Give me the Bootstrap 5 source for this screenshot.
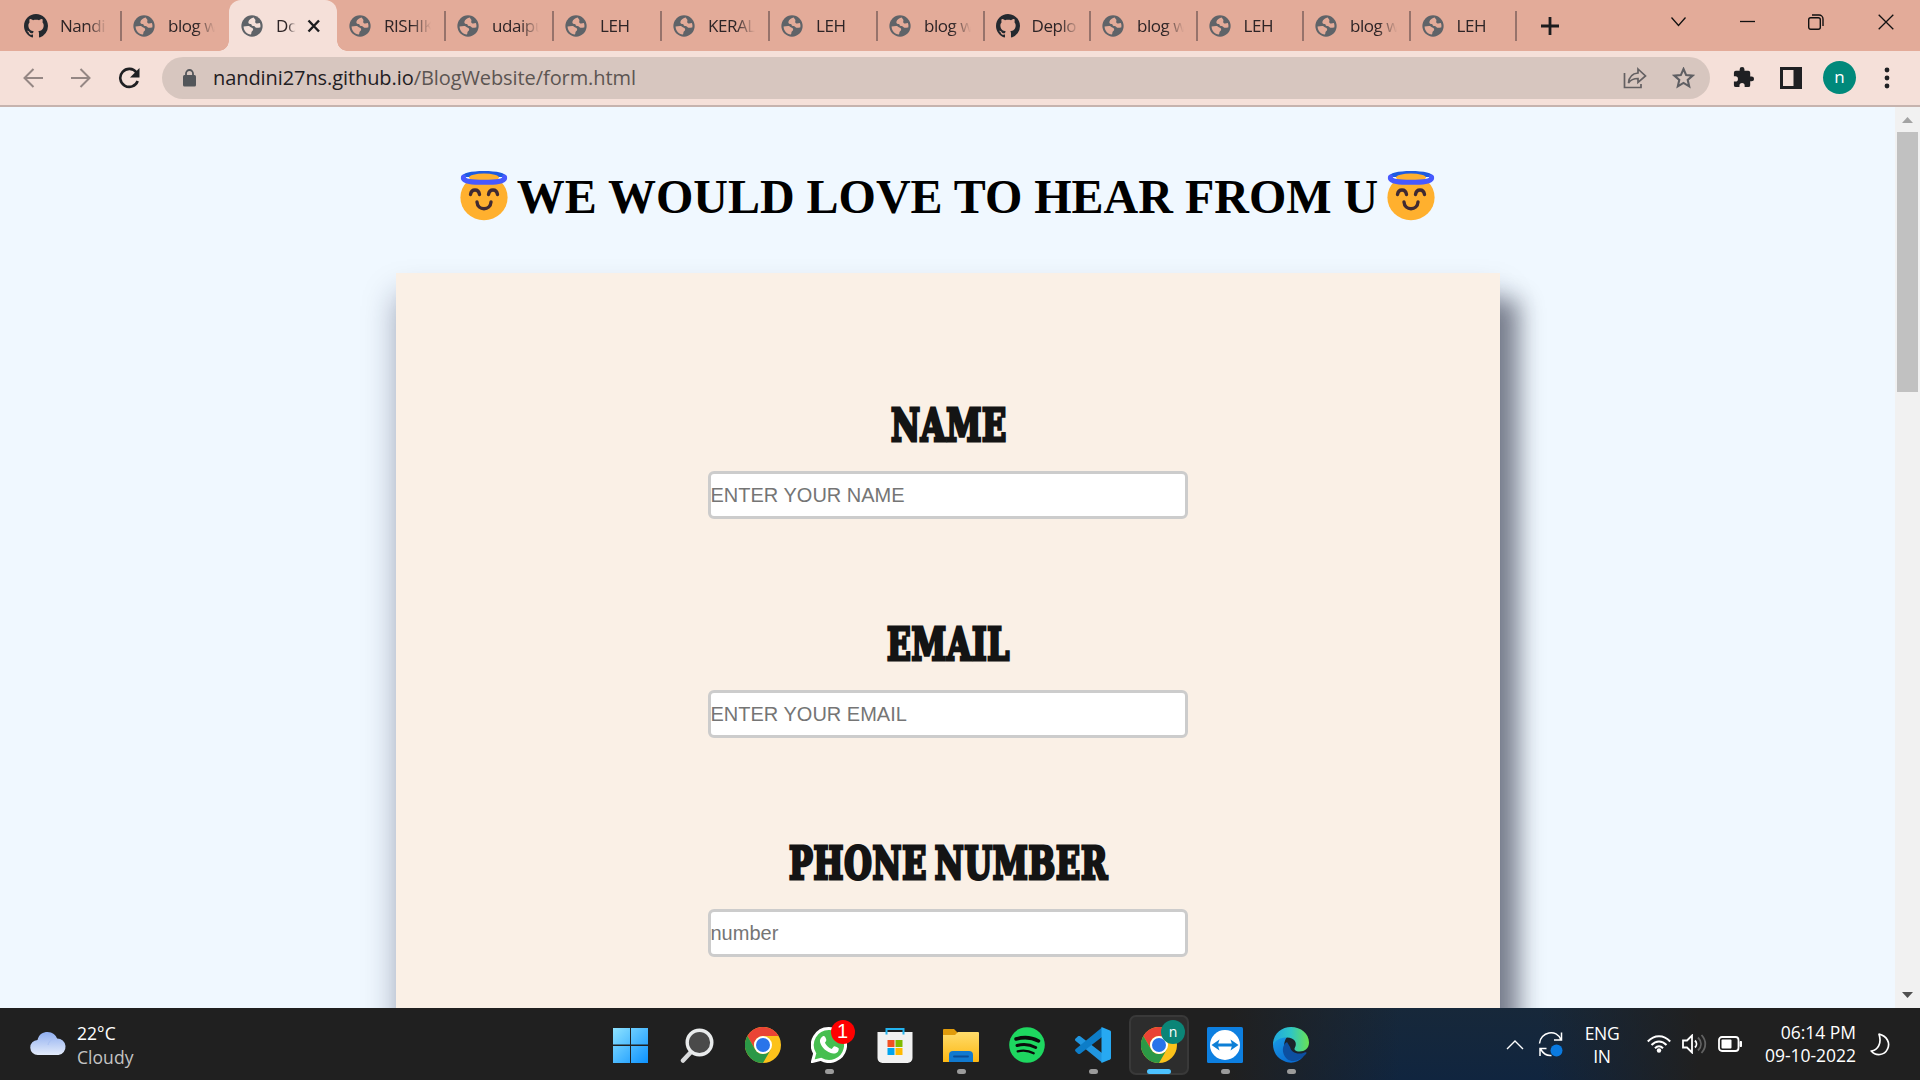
<!DOCTYPE html>
<html lang="en">
<head>
<meta charset="utf-8">
<title>Document</title>
<link href="https://cdn.jsdelivr.net/npm/bootstrap@5.3.0/dist/css/bootstrap.min.css" rel="stylesheet">
<style>
body{width:1920px;height:1080px;overflow:hidden;font-family:"Open Sans","Noto Sans",sans-serif;background:#f0f8ff}
svg{display:block;flex:none}
.tabstrip{height:51px;background:#e3ab99;padding-left:12px;color:#2d2426;--tabbg:#e3ab99}
.btab{width:108px;height:51px;padding-left:12px;position:relative;flex:none}
.btab.slim{width:106.5px}
.btab.sep::after{content:"";position:absolute;right:-1px;top:11px;width:2px;height:30px;background:#97736b}
.btab .ttl{width:48px;margin-left:13px;font-size:17px;letter-spacing:-.45px;line-height:24px;white-space:nowrap;-webkit-mask-image:linear-gradient(90deg,#000 58%,transparent 98%)}
.btab.first{width:109px}
.btab.first .ttl{margin-left:12px}
.btab.current{background:#f5e0d9;border-radius:12px 12px 0 0;--tabbg:#f5e0d9}
.btab.current .ttl{width:20px}
.btab.current::before,.btab.current::after{content:"";position:absolute;bottom:0;width:10px;height:10px}
.btab.current::before{left:-10px;background:radial-gradient(circle at 0 0,transparent 9.5px,#f5e0d9 10px)}
.btab.current::after{right:-10px;background:radial-gradient(circle at 100% 0,transparent 9.5px,#f5e0d9 10px)}
.winctl{padding-right:26.5px;gap:53.5px;height:43px}
.toolbar{height:56px;background:#f5e0d9;border-bottom:2px solid #c6b3ae;padding:6px 24px 7px 23px}
.omni{width:1548px;height:42px;border-radius:21px;background:#d7c6bf;margin-left:21px;padding:0 15px 0 21px;flex:none}
.addr{font-size:20px;letter-spacing:-.08px;line-height:30px;padding-top:1px;color:#5c5552;white-space:nowrap}
.addr b{font-weight:400;color:#1f2023}
.avatar{width:33px;height:33px;background:#00897b;color:#fff;font-size:17px;line-height:31px}
.view{height:901px;overflow:hidden}
.page{width:1895px;overflow:hidden;padding-top:56px}
.hello{font:bold 48px/64px "Liberation Serif","Times New Roman",serif;color:#000;height:110px;margin:0;gap:8.5px;white-space:nowrap}
.hello span{padding-top:2px}
.panel{width:1104px;height:900px;background:#faf0e6;box-shadow:20px 27px 22px rgba(20,22,42,.44),0 22px 30px rgba(20,30,65,.35);padding-top:125px;margin-left:396px}
.fieldrow{height:219px}
.fieldrow label svg{overflow:visible}
.fieldrow text{font:bold 44px "DejaVu Serif Condensed","DejaVu Serif",serif;fill:#141414;stroke:#141414;stroke-width:3;word-spacing:-5px;letter-spacing:1px}
.entry{width:480px;height:48px;border:3px solid #ccc;border-radius:6px;background:#fff;padding:0;font:20px "Liberation Sans",Arial,sans-serif;margin-top:28px;text-indent:-.5px}
.entry::placeholder{color:#757575;opacity:1}
.sbar{width:25px;background:#f1f1f1;padding:10px 0}
.thumb{width:21px;height:260px;background:#c1c1c1;margin-top:9px}
.taskbar{height:72px;color:#fff;background:linear-gradient(90deg,transparent 1230px,#202020 1230px,rgba(32,32,32,0) 1400px,rgba(32,32,32,0) 1540px,#202020 1700px),linear-gradient(#17283a,#10253f);position:relative}
.taskbar::before{content:"";position:absolute;left:0;top:0;width:1231px;height:72px;background:#202020}
.taskbar>*{position:relative}
.weather{width:598px;padding-left:30px;flex:none;gap:10px}
.wtxt{font-size:17.5px;line-height:24px;letter-spacing:.05px;padding-top:2px}
.wtxt .dim{color:#c4c4c4}
.slot{width:66px;height:72px;padding-top:19px;flex:none;position:relative}
.pill{width:9px;height:5px;border-radius:3px;background:#9b9b9b;margin-top:6px}
.pill.wide{width:24px;background:#4cc2ff}
.slot.on::before{content:"";position:absolute;left:3px;top:7px;width:60px;height:60px;background:#2d2d2d;border:2px solid #393939;border-radius:7px}
.slot>*{position:relative}
.slot .bubble{position:absolute;left:34.5px;top:12px;width:24px;height:24px;border-radius:50%;background:red;font:20px/23px "Liberation Sans",sans-serif;text-align:center}
.slot .bubble.teal{background:#0b8577;font:14px/23px "Open Sans",sans-serif;left:35px}
.tray{padding-left:182px;font-size:17.5px;line-height:23px;letter-spacing:-.3px}
.lang{width:60px;margin-left:9px;padding-top:1px}
.clock{width:100px;margin-left:13px;letter-spacing:-.03px}
</style>
<script src="https://cdn.jsdelivr.net/npm/bootstrap@5.3.0/dist/js/bootstrap.bundle.min.js"></script>
</head>
<body>
<svg width="0" height="0" class="position-absolute">
<defs>
<symbol id="globe" viewBox="0 0 24 24"><circle cx="12" cy="12" r="11.6" fill="#5f6368"/><path d="M14 2.800C11.500 3.400 8.500 5 8 7.600c-.2 1.800 1.600 2.200 3.200 2.200.3 1.500 1 2.300 2.600 2.300 1.400 0 1.600 1.500 3 1.700 1.500.2 3-.4 4.200-.2.400-1.600.3-3.400-.4-5-1.500.2-3.200 1.300-4.600.1-1.300-1.200.3-2.400-.4-3.500-.4-.7-1.200-1-1.600-2.400zM2.800 12.600c.1 4.600 3.400 8.200 8 8.800.8-1.200.2-2.400 1-3.300.9-.9 1.700-1.300 1.400-2.800-.3-1.500-1.900-1.500-2.900-2.200-.9-.7-1.400-1.300-2.700-1.100-1.700.2-3.200.6-4.800.6z" fill="var(--tabbg)"/></symbol>
<symbol id="octo" viewBox="0 0 16 16"><path fill="#24292f" d="M8 0C3.580 0 0 3.580 0 8c0 3.540 2.290 6.530 5.470 7.590.4.070.55-.17.55-.38 0-.19-.01-.82-.01-1.490-2.010.37-2.530-.49-2.690-.94-.09-.23-.48-.94-.82-1.130-.28-.15-.68-.52-.01-.53.63-.01 1.080.58 1.230.82.72 1.210 1.870.87 2.330.66.070-.52.28-.87.51-1.070-1.780-.2-3.640-.89-3.640-3.950 0-.87.31-1.590.82-2.150-.08-.2-.36-1.020.08-2.120 0 0 .67-.21 2.200.82.640-.18 1.320-.27 2-.27s1.360.09 2 .27c1.530-1.040 2.200-.82 2.200-.82.440 1.100.16 1.920.08 2.120.51.56.82 1.270.82 2.150 0 3.070-1.870 3.750-3.650 3.950.29.25.54.73.54 1.480 0 1.070-.01 1.930-.01 2.200 0 .21.15.46.55.38A8.010 8.010 0 0 0 16 8c0-4.420-3.580-8-8-8z"/></symbol>
<symbol id="angel" viewBox="0 0 48 50"><ellipse cx="24" cy="26.500" rx="23.600" ry="22.800" fill="#ffb02e"/><path d="M1.500 6C2 2 11 0 24 0s22 2 22.500 6z" fill="#1d5be0"/><ellipse cx="24" cy="6.500" rx="15" ry="4" fill="#ffb02e"/><path d="M3.500 6C2 10.800 14 11.300 24 11.300s22-.5 20.500-5.300" fill="none" stroke="#4759ff" stroke-width="5" stroke-linecap="round"/><g fill="none" stroke="#402a32" stroke-width="3.400" stroke-linecap="round"><path d="M10.500 23.500c1-6 8-6 9 0M28.500 23.500c1-6 8-6 9 0M17 31c.5 9 13.500 9 14 0"/></g></symbol>
<symbol id="chrome" viewBox="0 0 36 36"><circle cx="18" cy="18" r="18" fill="#fcc21b"/><path d="M2.400 9A18 18 0 0 1 33.600 9H18a9 9 0 0 0-7.800 13.500z" fill="#ea4335"/><path d="M2.400 9A18 18 0 0 0 18 36l7.800-13.500A9 9 0 0 1 10.200 22.500z" fill="#2b9846"/><circle cx="18" cy="18" r="9" fill="#fff"/><circle cx="18" cy="18" r="7" fill="#2a74ea"/></symbol>
<linearGradient id="gw" x2="1" y2="1"><stop stop-color="#8ee3ff"/><stop offset="1" stop-color="#0c92ff"/></linearGradient>
<linearGradient id="gc" x2="0" y2="1"><stop stop-color="#8faef0"/><stop offset="1" stop-color="#e4ecfb"/></linearGradient>
<linearGradient id="gf" x2="0" y2="1"><stop stop-color="#ffdc6b"/><stop offset="1" stop-color="#fdb813"/></linearGradient>
<linearGradient id="ge" x2="1"><stop stop-color="#1fa7df"/><stop offset=".5" stop-color="#2fc6c4"/><stop offset="1" stop-color="#6ae253"/></linearGradient>
<linearGradient id="gb" x2=".6" y2="1"><stop stop-color="#1ba0e8"/><stop offset="1" stop-color="#0a6bd0"/></linearGradient>
</defs></svg>

<header>
<div class="tabstrip d-flex align-items-center">
 <div class="btab first sep d-flex align-items-center"><svg width="24" height="24"><use href="#octo"/></svg><span class="ttl">Nandi</span></div>
 <div class="btab d-flex align-items-center"><svg width="22" height="22"><use href="#globe"/></svg><span class="ttl">blog w</span></div>
 <div class="btab current d-flex align-items-center"><svg width="22" height="22"><use href="#globe"/></svg><span class="ttl">Do</span><svg style="margin-left:10px" width="16" height="16" viewBox="0 0 16 16"><path d="M2.500 2.500l10.500 11M13 2.500l-10.500 11" stroke="#1c1c1e" stroke-width="2.400"/></svg></div>
 <div class="btab sep d-flex align-items-center"><svg width="22" height="22"><use href="#globe"/></svg><span class="ttl">RISHIK</span></div>
 <div class="btab sep d-flex align-items-center"><svg width="22" height="22"><use href="#globe"/></svg><span class="ttl">udaipu</span></div>
 <div class="btab sep d-flex align-items-center"><svg width="22" height="22"><use href="#globe"/></svg><span class="ttl">LEH</span></div>
 <div class="btab sep d-flex align-items-center"><svg width="22" height="22"><use href="#globe"/></svg><span class="ttl">KERAL</span></div>
 <div class="btab sep d-flex align-items-center"><svg width="22" height="22"><use href="#globe"/></svg><span class="ttl">LEH</span></div>
 <div class="btab slim sep d-flex align-items-center"><svg width="22" height="22"><use href="#globe"/></svg><span class="ttl">blog w</span></div>
 <div class="btab slim sep d-flex align-items-center"><svg width="24" height="24"><use href="#octo"/></svg><span class="ttl" style="margin-left:12px">Deplo</span></div>
 <div class="btab slim sep d-flex align-items-center"><svg width="22" height="22"><use href="#globe"/></svg><span class="ttl">blog w</span></div>
 <div class="btab slim sep d-flex align-items-center"><svg width="22" height="22"><use href="#globe"/></svg><span class="ttl">LEH</span></div>
 <div class="btab slim sep d-flex align-items-center"><svg width="22" height="22"><use href="#globe"/></svg><span class="ttl">blog w</span></div>
 <div class="btab slim sep d-flex align-items-center"><svg width="22" height="22"><use href="#globe"/></svg><span class="ttl">LEH</span></div>
 <svg style="margin-left:23.5px" width="20" height="20" viewBox="0 0 20 20"><path d="M10 1v18M1 10h18" stroke="#1c1c1e" stroke-width="2.800"/></svg>
 <div class="winctl d-flex align-items-center ms-auto align-self-start">
  <svg width="15" height="15" viewBox="0 0 15 15" fill="none" stroke="#111" stroke-width="1.300"><path d="M.5 3.500l7 8 7-8"/></svg>
  <svg width="15" height="15" viewBox="0 0 15 15"><path d="M0 7.500h15" stroke="#111" stroke-width="1.300"/></svg>
  <svg width="16" height="16" viewBox="0 0 16 16" fill="none" stroke="#111" stroke-width="1.400"><rect x=".7" y="3.700" width="11.600" height="11.600" rx="2"/><path d="M4 1h7a4 4 0 0 1 4 4v7"/></svg>
  <svg width="16" height="16" viewBox="0 0 16 16"><path d="M.7.7l14.600 14.600M15.300.7L.7 15.300" stroke="#111" stroke-width="1.300"/></svg>
 </div>
</div>
<div class="toolbar d-flex align-items-center">
 <svg width="20" height="20" viewBox="0 0 20 20" fill="none" stroke="#958784" stroke-width="2"><path d="M20 10H2M10.500 1L1.500 10l9 9"/></svg>
 <svg style="margin-left:28px" width="20" height="20" viewBox="0 0 20 20" fill="none" stroke="#958784" stroke-width="2"><path d="M0 10h18M9.500 1l9 9-9 9"/></svg>
 <svg style="margin-left:27px" width="23" height="22" viewBox="0 0 23 22"><path d="M18.500 5.500a9 9 0 1 0 1.200 8.500" fill="none" stroke="#1f2023" stroke-width="2.600"/><path d="M21.500 1v9.500H12z" fill="#1f2023"/></svg>
 <div class="omni d-flex align-items-center">
  <svg width="13" height="18" viewBox="0 0 13 18"><rect y="6" width="13" height="11.500" rx="1.500" fill="#53565a"/><path d="M3 7V4.500a3.500 3.500 0 0 1 7 0V7" fill="none" stroke="#53565a" stroke-width="1.800"/></svg>
  <span class="addr" style="margin-left:17px"><b>nandini27ns.github.io</b>/BlogWebsite/form.html</span>
  <svg class="ms-auto" width="24" height="22" viewBox="0 0 24 22" fill="none" stroke="#646062" stroke-width="1.700"><path d="M1.500 6v14.500h16.500V17"/><path d="M15 2l7.500 7-7.500 6.500v-4C10.500 11.500 7.500 13 5.500 16c.5-6 4-9.500 9.500-10z"/></svg>
  <svg style="margin-left:25px" width="23" height="22" viewBox="0 0 24 24" fill="none" stroke="#5f5f63" stroke-width="2.300"><path d="M12 2.200l2.900 6.600 7.100.6-5.400 4.700 1.600 7-6.200-3.700-6.200 3.700 1.600-7L2 9.400l7.100-.6z"/></svg>
 </div>
 <svg style="margin-left:22px" width="23" height="23" viewBox="0 0 24 24"><path fill="#1f2023" d="M20.500 11H19V7a2 2 0 0 0-2-2h-4V3.500a2.500 2.500 0 0 0-5 0V5H4a2 2 0 0 0-2 2v3.800h1.500a2.700 2.700 0 0 1 0 5.400H2V20a2 2 0 0 0 2 2h3.800v-1.500a2.700 2.700 0 0 1 5.400 0V22H17a2 2 0 0 0 2-2v-4h1.500a2.500 2.500 0 0 0 0-5z"/></svg>
 <svg style="margin-left:25px" width="22" height="22" viewBox="0 0 22 22"><path fill="#1f2023" fill-rule="evenodd" d="M0 0h22v22H0zM3 3v16h10.500V3z"/></svg>
 <div class="avatar rounded-circle text-center" style="margin-left:21px">n</div>
 <svg style="margin-left:28px" width="6" height="22" viewBox="0 0 6 22" fill="#1f2023"><circle cx="3" cy="3" r="2.400"/><circle cx="3" cy="11" r="2.400"/><circle cx="3" cy="19" r="2.400"/></svg>
</div>
</header>

<main class="view d-flex">
 <div class="page">
  <h1 class="hello d-flex justify-content-center"><svg style="margin-top:8px" width="48" height="50"><use href="#angel"/></svg><span>WE WOULD LOVE TO HEAR FROM U</span><svg style="margin-top:8px" width="48" height="50"><use href="#angel"/></svg></h1>
  <form class="panel">
   <div class="fieldrow d-flex flex-column align-items-center"><label for="nm"><svg width="124" height="45"><text x="5" y="43" textLength="116" lengthAdjust="spacingAndGlyphs">NAME</text></svg></label><input id="nm" class="entry" placeholder="ENTER YOUR NAME"></div>
   <div class="fieldrow d-flex flex-column align-items-center"><label for="em"><svg width="130" height="45"><text x="4" y="43" textLength="123" lengthAdjust="spacingAndGlyphs">EMAIL</text></svg></label><input id="em" class="entry" placeholder="ENTER YOUR EMAIL"></div>
   <div class="fieldrow d-flex flex-column align-items-center"><label for="ph"><svg width="326" height="45"><text x="4" y="43" textLength="319" lengthAdjust="spacingAndGlyphs">PHONE NUMBER</text></svg></label><input id="ph" class="entry" placeholder="number"></div>
  </form>
 </div>
 <div class="sbar d-flex flex-column align-items-center">
  <svg width="11" height="6"><path d="M0 6L5.500 0 11 6z" fill="#a3a3a3"/></svg>
  <div class="thumb"></div>
  <svg class="mt-auto" width="11" height="6"><path d="M0 0l5.500 6L11 0z" fill="#505050"/></svg>
 </div>
</main>

<footer class="taskbar d-flex">
 <div class="weather d-flex align-items-center">
  <svg width="37" height="26" viewBox="0 0 37 26"><path d="M8 24a7.500 7.500 0 0 1-.5-15C9 3 13 1 17.500 1c5 0 8.500 3 9.500 6.500A8.300 8.300 0 0 1 28.500 24z" fill="url(#gc)"/><path d="M18 14c1-4.500 5-7 9-6.500" fill="none" stroke="#a9c0f3"/></svg>
  <div class="wtxt"><div>22°C</div><div class="dim">Cloudy</div></div>
 </div>
 <div class="slot d-flex flex-column align-items-center"><svg width="36" height="36" viewBox="0 0 36 36"><path fill="url(#gw)" d="M0 1h17v16.500H0zM18 1h17v16.500H18zM0 19h17v17H0zM18 19h17v17H18z"/></svg></div>
 <div class="slot d-flex flex-column align-items-center"><svg width="36" height="36" viewBox="0 0 36 36"><path d="M12 25l-8 8.500" stroke="#d9dadb" stroke-width="4.500" stroke-linecap="round"/><circle cx="20.500" cy="15.500" r="12.300" fill="#4a4a4a" stroke="#e9ebec" stroke-width="3.400"/></svg></div>
 <div class="slot d-flex flex-column align-items-center"><svg width="36" height="36"><use href="#chrome"/></svg></div>
 <div class="slot d-flex flex-column align-items-center"><svg width="36" height="36" viewBox="0 0 36 36"><path d="M18 1.500A16.500 16.500 0 1 1 10 32.400L1.500 34.500 3.700 26.500A16.500 16.500 0 0 1 18 1.500z" fill="#46bf50" stroke="#fff" stroke-width="3"/><path d="M11.500 9.500c1.500-.9 2.500-.2 3.300 1.800.9 2.100.7 2.500-.9 4.400 1.500 3 3.700 5 6.800 6.200l2.100-2.500c.7-.6 4.300 1.300 4.900 1.800.4 3.500-2.500 5.600-5.500 5.300C15.500 25.500 10.500 20.500 9 15c-.4-2.300.9-4.500 2.500-5.500z" fill="#fff"/></svg><span class="pill"></span><span class="bubble">1</span></div>
 <div class="slot d-flex flex-column align-items-center"><svg width="36" height="36" viewBox="0 0 36 36"><path d="M.5 5H35.500V31a5 5 0 0 1-5 5h-25a5 5 0 0 1-5-5z" fill="#f1f1f1"/><path d="M9.500 7.500V2h17v5.500" fill="none" stroke="#23b3ee" stroke-width="2"/><path fill="#f25022" d="M10.500 13h7v7h-7z"/><path fill="#7fba00" d="M18.500 13h7v7h-7z"/><path fill="#00a4ef" d="M10.500 21h7v7h-7z"/><path fill="#ffb900" d="M18.500 21h7v7h-7z"/></svg></div>
 <div class="slot d-flex flex-column align-items-center"><svg width="36" height="36" viewBox="0 0 36 36"><path d="M0 3a1 1 0 0 1 1-1h10l4 4v6H0z" fill="#e09b0b"/><path d="M0 8h12l3-3h20a1 1 0 0 1 1 1v28a1 1 0 0 1-1 1H0z" fill="url(#gf)"/><path d="M6 35v-7a4 4 0 0 1 4-4h16a4 4 0 0 1 4 4v7z" fill="#1079cf"/><path d="M11 29.500h14" stroke="#0a4d95" stroke-width="1.800" stroke-linecap="round"/></svg><span class="pill"></span></div>
 <div class="slot d-flex flex-column align-items-center"><svg width="36" height="36" viewBox="0 0 36 36"><circle cx="18" cy="18" r="17.800" fill="#1ed760"/><g fill="none" stroke="#0b0b0b" stroke-linecap="round"><path d="M7 12c8-2.300 16-1.500 22.500 2" stroke-width="3.500"/><path d="M8 18.500c7-2 13-1.100 18.700 2" stroke-width="2.900"/><path d="M8.700 24.300c6-1.500 11-.8 16 1.900" stroke-width="2.300"/></g></svg></div>
 <div class="slot d-flex flex-column align-items-center"><svg width="36" height="36" viewBox="0 0 36 36"><path d="M.6 11.500L3 9.300c.8-.6 1.500-.5 2.200 0L27 26v9.500L.7 14c-.9-.9-.9-1.700-.1-2.500z" fill="#2196e0"/><path d="M.6 24.500L3 26.700c.8.600 1.500.5 2.200 0L27 10V.5L.7 22c-.9.900-.9 1.700-.1 2.500z" fill="#0d7dc8"/><path d="M26.500 0L35 3.500c.7.300 1 .8 1 1.500v26c0 .7-.3 1.200-1 1.500L26.500 36z" fill="#27a9f2"/></svg><span class="pill"></span></div>
 <div class="slot on d-flex flex-column align-items-center"><svg width="36" height="36"><use href="#chrome"/></svg><span class="pill wide"></span><span class="bubble teal">n</span></div>
 <div class="slot d-flex flex-column align-items-center"><svg width="36" height="36" viewBox="0 0 36 36"><rect width="36" height="36" rx="1.500" fill="#0d7fe0"/><circle cx="18" cy="18" r="15" fill="#fff"/><path d="M4.500 18l8-5.500-1.300 4h13.600l-1.300-4 8 5.500-8 5.500 1.300-4H11.200l1.300 4z" fill="#0d7fd6"/></svg><span class="pill"></span></div>
 <div class="slot d-flex flex-column align-items-center"><svg width="36" height="36" viewBox="0 0 36 36"><path d="M0 17C2 8 9 5 17 8c-5 2-7 9-5 15 2 7 9 10 18 7-5 6-13 7-19 4C4 31 0 25 0 17z" fill="url(#gb)"/><path d="M14 15c-5 3-6 11 0 17 6 4 13 2 19-5 1.500-2-.5-2-2-1.300-7 2.500-13-.7-14-5.700z" fill="#0d4fa0"/><path d="M0 16C1 6 9 0 18 0c10 0 18 6.500 18 15.500 0 6-4.500 9-9.500 9-4 0-6-2-4.500-4 2.500-4.500-.5-10-8-10C7.500 10.500 2 13 0 18z" fill="url(#ge)"/></svg><span class="pill"></span></div>
 <div class="tray d-flex align-items-center">
  <svg width="18" height="11" viewBox="0 0 18 11"><path d="M1 10l8-8 8 8" fill="none" stroke="#fff" stroke-width="1.400"/></svg>
  <svg style="margin-left:14px" width="25" height="26" viewBox="0 0 25 26"><g fill="none" stroke="#fff" stroke-width="1.500"><path d="M1.500 12.500C2 1 19-3 23 9M23.500 1.500V9H16M8.500 17.500H2V25M2.500 18c3 5 7 7 11 6.500"/></g><circle cx="18.500" cy="19.500" r="6" fill="#0a7ae0"/></svg>
  <div class="lang text-center"><div>ENG</div><div>IN</div></div>
  <svg style="margin-left:15px" width="24" height="18" viewBox="0 0 24 18"><g fill="none" stroke="#fff" stroke-width="2"><path d="M.8 6.500c6.500-7 15.900-7 22.400 0M4.500 10c4.500-4.800 10.500-4.800 15 0M8 13.300c2.500-2.700 5.500-2.700 8 0"/></g><circle cx="12" cy="15.500" r="2.200" fill="#fff"/></svg>
  <svg style="margin-left:11px" width="25" height="20" viewBox="0 0 25 20" fill="none" stroke="#fff" stroke-width="1.800"><path d="M1 6.500h4l5-5v17l-5-5H1zM13 6.500c2 2 2 5 0 7"/><path d="M16 3.500c4 4 4 9 0 13M19.500 1c5 5.500 5 12.500 0 18" stroke="#626262"/></svg>
  <svg style="margin-left:11px" width="25" height="16" viewBox="0 0 25 16"><rect x="1" y="1" width="19.500" height="14" rx="3" fill="none" stroke="#fff" stroke-width="1.800"/><rect x="3.500" y="3.500" width="10" height="9" rx="1" fill="#fff"/><path d="M22 5.500h1.500v5H22z" fill="#fff" stroke="#fff"/></svg>
  <div class="clock text-end"><div>06:14 PM</div><div>09-10-2022</div></div>
  <svg style="margin-left:14px" width="20" height="23" viewBox="0 0 20 23"><path d="M9 1.200C17 3 20.500 10 17.500 16 14.500 22.500 6 23.500 1.200 18 8 17 12 10 9 1.200z" fill="none" stroke="#fff" stroke-width="1.700" stroke-linejoin="round"/></svg>
 </div>
</footer>
</body>
</html>
